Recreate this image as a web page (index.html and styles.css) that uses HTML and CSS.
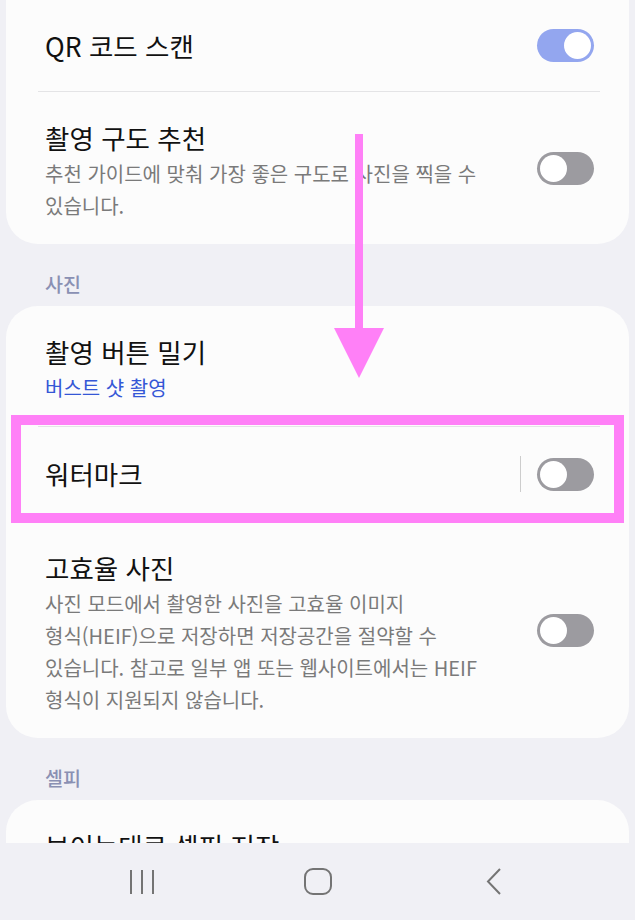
FILE: index.html
```html
<!DOCTYPE html>
<html lang="ko">

<head>
  <meta charset="UTF-8">
  <meta name="viewport" content="width=device-width, initial-scale=1.0">
  <title>카메라 설정</title>
  <link rel="stylesheet" href="styles.css">
</head>

<body>
  <div class="screen">
    <div class="content">
      <!-- 상단 카드 -->
      <section class="card card-first">
        <div class="row row-single">
          <div class="text">
            <div class="title">QR 코드 스캔</div>
          </div>
          <span class="switch on"></span>
        </div>
        <div class="row">
          <div class="text">
            <div class="title">촬영 구도 추천</div>
            <div class="desc">추천 가이드에 맞춰 가장 좋은 구도로 사진을 찍을 수 있습니다.</div>
          </div>
          <span class="switch"></span>
        </div>
      </section>

      <h2 class="group">사진</h2>
      <section class="card">
        <div class="row">
          <div class="text">
            <div class="title">촬영 버튼 밀기</div>
            <div class="value">버스트 샷 촬영</div>
          </div>
        </div>
        <div class="row row-single">
          <div class="text">
            <div class="title">워터마크</div>
          </div>
          <span class="sep"></span>
          <span class="switch"></span>
        </div>
        <div class="row">
          <div class="text">
            <div class="title">고효율 사진</div>
            <div class="desc">사진 모드에서 촬영한 사진을 고효율 이미지 <span class="nowrap">형식(HEIF)으로</span> 저장하면 저장공간을 절약할 수 있습니다. 참고로 일부 앱 또는 웹사이트에서는 HEIF 형식이 지원되지 않습니다.</div>
          </div>
          <span class="switch"></span>
        </div>
      </section>

      <h2 class="group">셀피</h2>
      <section class="card">
        <div class="row">
          <div class="text">
            <div class="title">보이는대로 셀피 저장</div>
          </div>
        </div>
      </section>
    </div>

    <!-- 하단 내비게이션 -->
    <nav class="navbar">
      <a href="" class="nav-btn">
        <svg width="26" height="26" viewBox="0 0 26 26">
          <path d="M2 1v24M13 1v24M24 1v24" stroke="#747474" stroke-width="2" fill="none" />
        </svg>
      </a>
      <a href="" class="nav-btn">
        <svg width="28" height="27" viewBox="0 0 28 27">
          <rect x="1" y="1" width="26" height="25" rx="8" stroke="#747474" stroke-width="2" fill="none" />
        </svg>
      </a>
      <a href="" class="nav-btn">
        <svg width="16" height="27" viewBox="0 0 16 27">
          <path d="M14 1L2 13.5L14 26" stroke="#747474" stroke-width="2" fill="none" />
        </svg>
      </a>
    </nav>

    <!-- 강조 표시 -->
    <div class="mark-box"></div>
    <svg class="mark-arrow" width="60" height="250" viewBox="0 0 60 250">
      <rect x="25" y="4" width="8" height="196" fill="#ff80f7" />
      <polygon points="4,198 54,198 29,248" fill="#ff80f7" />
    </svg>
  </div>
</body>

</html>
```

FILE: styles.css
```css
* {
  box-sizing: border-box;
}

body {
  margin: 0;
  background-color: #f0f0f5;
  font-family: "Noto Sans CJK KR", "Noto Sans", sans-serif;
  color: #111;
  word-break: keep-all;
}

a {
  text-decoration: none;
}

.screen {
  position: relative;
  height: 920px;
  display: flex;
  flex-direction: column;
  overflow: hidden;
}

.content {
  flex: 1;
  overflow: hidden;
}

.card {
  margin: 0 6px;
  background-color: #fcfcfc;
  border-radius: 32px;
}

.card-first {
  border-radius: 0 0 32px 32px;
}

.row {
  display: flex;
  align-items: center;
  margin: 0 29px 0 32px;
  padding: 30px 6px 22px 7px;
}

.row+.row {
  border-top: 1px solid #e4e4e6;
}

.row-single {
  padding-top: 29px;
  padding-bottom: 29px;
}

.text {
  flex: 1;
  min-width: 0;
}

.title {
  font-size: 26.5px;
  line-height: 32px;
  color: #111;
}

.desc {
  margin-top: 4px;
  font-size: 20px;
  line-height: 32px;
  color: #7a7a7a;
  max-width: 448px;
}

.nowrap {
  white-space: nowrap;
}

.value {
  margin-top: 4px;
  font-size: 20px;
  line-height: 32px;
  color: #3557d6;
}

.group {
  margin: 0;
  padding: 27px 0 9px 45px;
  font-size: 19.5px;
  line-height: 26px;
  font-weight: 500;
  color: #8a90b3;
}

/* 토글 스위치 */
.switch {
  position: relative;
  flex: none;
  width: 57px;
  height: 33px;
  margin-left: 10px;
  margin-bottom: 8px;
  border-radius: 17px;
  background-color: #9c9ba0;
}

.row-single .switch {
  margin-bottom: 0;
}

.switch::after {
  content: "";
  position: absolute;
  top: 3px;
  left: 3px;
  width: 27px;
  height: 27px;
  border-radius: 50%;
  background-color: #fff;
}

.switch.on {
  background-color: #93a6ef;
}

.switch.on::after {
  left: 27px;
}

.sep {
  flex: none;
  width: 1px;
  height: 36px;
  margin-right: 6px;
  background-color: #cdcdcd;
}

/* 하단 바 */
.navbar {
  flex: none;
  height: 77px;
  display: grid;
  grid-template-columns: repeat(3, 176px);
  justify-content: center;
  align-items: center;
  background-color: #f0f0f5;
}

.nav-btn {
  display: flex;
  justify-content: center;
  align-items: center;
}

.nav-btn svg {
  display: block;
}

.mark-box {
  position: absolute;
  left: 11px;
  top: 415px;
  width: 613px;
  height: 108px;
  border: 10px solid #ff80f7;
}

.mark-arrow {
  position: absolute;
  left: 330px;
  top: 130px;
}
```
